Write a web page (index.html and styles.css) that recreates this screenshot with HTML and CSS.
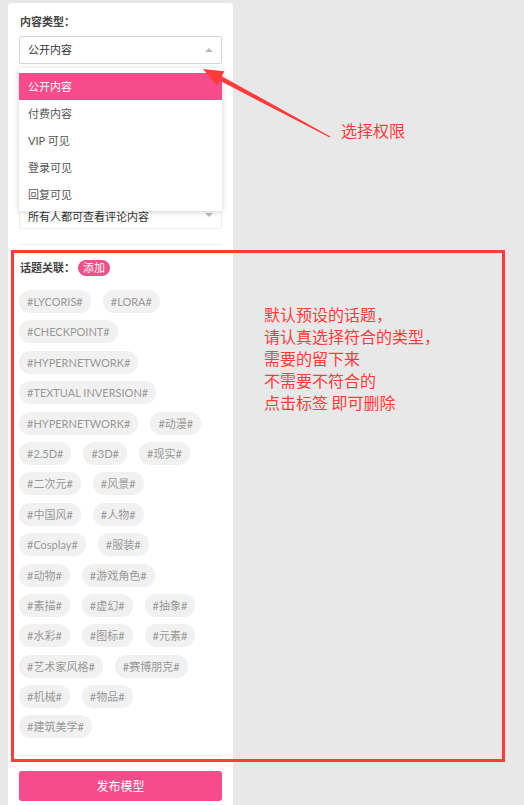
FILE: index.html
```html
<!DOCTYPE html>
<html lang="zh-CN">
<head>
  <meta charset="UTF-8">
  <meta name="viewport" content="width=device-width, initial-scale=1">
  <title>发布模型</title>
  <link rel="stylesheet" href="styles.css">
</head>
<body>
  <div class="page">
    <div class="panel">
      <div class="field">
        <div class="field-label">内容类型：</div>
        <div class="select">
          <span>公开内容</span>
          <i class="caret caret-up"></i>
          <!-- 展开的下拉菜单 -->
          <ul class="dropdown">
            <li class="active">公开内容</li>
            <li>付费内容</li>
            <li>VIP 可见</li>
            <li>登录可见</li>
            <li>回复可见</li>
          </ul>
        </div>
      </div>

      <div class="field">
        <div class="field-label">下载权限：</div>
        <div class="select">
          <span>允许下载</span>
          <i class="caret"></i>
        </div>
      </div>

      <div class="field">
        <div class="field-label">评论权限：</div>
        <div class="select select-low">
          <span>所有人都可查看评论内容</span>
          <i class="caret"></i>
        </div>
      </div>

      <div class="topics">
        <div class="topics-head">
          <span class="field-label">话题关联：</span>
          <span class="add-btn">添加</span>
        </div>
        <div class="tags">
          <span class="tag">#LYCORIS#</span>
          <span class="tag">#LORA#</span>
          <span class="tag">#CHECKPOINT#</span>
          <span class="tag">#HYPERNETWORK#</span>
          <span class="tag">#TEXTUAL INVERSION#</span>
          <span class="tag">#HYPERNETWORK#</span>
          <span class="tag">#动漫#</span>
          <span class="tag">#2.5D#</span>
          <span class="tag">#3D#</span>
          <span class="tag">#现实#</span>
          <span class="tag">#二次元#</span>
          <span class="tag">#风景#</span>
          <span class="tag">#中国风#</span>
          <span class="tag">#人物#</span>
          <span class="tag">#Cosplay#</span>
          <span class="tag">#服装#</span>
          <span class="tag">#动物#</span>
          <span class="tag">#游戏角色#</span>
          <span class="tag">#素描#</span>
          <span class="tag">#虚幻#</span>
          <span class="tag">#抽象#</span>
          <span class="tag">#水彩#</span>
          <span class="tag">#图标#</span>
          <span class="tag">#元素#</span>
          <span class="tag">#艺术家风格#</span>
          <span class="tag">#赛博朋克#</span>
          <span class="tag">#机械#</span>
          <span class="tag">#物品#</span>
          <span class="tag">#建筑美学#</span>
        </div>
      </div>

      <button class="submit">发布模型</button>
    </div>

    <!-- 标注 -->
    <div class="mark-box"></div>
    <svg class="mark-arrow" width="524" height="805" viewBox="0 0 524 805">
      <polygon points="203,69 224.4,71.3 221.8,76.2 330.3,136.5 329.8,137.5 219.4,80.6 216.8,85.5" fill="#ff3b3b"/>
    </svg>
    <div class="mark-note note-perm">选择权限</div>
    <div class="mark-note note-topics">
      默认预设的话题，<br>
      请认真选择符合的类型，<br>
      需要的留下来<br>
      不需要不符合的<br>
      点击标签 即可删除
    </div>
  </div>
</body>
</html>
```

FILE: styles.css
```css
body {
  margin: 0;
  background: #e8e8e8;
  font-family: Lato, "Noto Sans CJK SC", sans-serif;
  color: #333;
}
.page {
  position: relative;
  height: 805px;
  overflow: hidden;
}
.panel {
  width: 203px;
  min-height: 900px;
  margin: 3px 0 0 8px;
  padding: 11px 11px 20px;
  background: #fff;
  border-radius: 4px 4px 0 0;
}
.field + .field {
  margin-top: 32.5px;
}
.field-label {
  font-size: 11px;
  line-height: 16px;
  font-weight: bold;
  color: #444;
  padding-left: 1px;
}
.field .field-label {
  margin-bottom: 6px;
}
.select {
  position: relative;
  height: 26px;
  line-height: 26px;
  border: 1px solid #d6d6d6;
  border-radius: 2px;
  padding: 0 8px;
  font-size: 11px;
  color: #333;
}
.select-low {
  line-height: 29px;
  border-color: #eee;
}
.caret {
  position: absolute;
  right: 8px;
  top: 11px;
  border-left: 4px solid transparent;
  border-right: 4px solid transparent;
  border-top: 4px solid #bbb;
}
.caret-up {
  border-top: none;
  border-bottom: 4px solid #bbb;
}
.dropdown {
  position: absolute;
  left: -1px;
  top: 31px;
  z-index: 2;
  width: 203px;
  margin: 0;
  padding: 5px 0 3px;
  list-style: none;
  background: #fff;
  box-shadow: 0 1px 6px rgba(0,0,0,0.18);
}
.dropdown li {
  height: 27px;
  line-height: 27px;
  padding: 0 9px;
  color: #555;
}
.dropdown li.active {
  background: #f64c8b;
  color: #fff;
}
.topics {
  margin-top: 15px;
  padding: 15px 0 9px;
  border-top: 1px solid #eee;
  border-bottom: 1px solid #eee;
}
.topics-head {
  display: flex;
  align-items: center;
  height: 16px;
}
.add-btn {
  margin-left: 3px;
  height: 16px;
  line-height: 16px;
  padding: 0 5px;
  border-radius: 8px;
  background: #f0508a;
  color: #fff;
  font-size: 11px;
}
.tags {
  display: flex;
  flex-wrap: wrap;
  margin-top: 14px;
  padding-right: 6px;
}
.tag {
  height: 23px;
  line-height: 23px;
  padding: 0 8px;
  margin: 0 12px 7.4px 0;
  border-radius: 12px;
  background: #f1f1f1;
  color: #999;
  font-size: 11px;
  white-space: nowrap;
  cursor: pointer;
}
.submit {
  display: block;
  width: 100%;
  height: 30px;
  margin-top: 15px;
  border: none;
  border-radius: 3px;
  background: #f64c8b;
  color: #fff;
  font-family: inherit;
  font-size: 12px;
  cursor: pointer;
}
.mark-box {
  position: absolute;
  left: 11px;
  top: 250px;
  width: 488px;
  height: 506px;
  border: 3px solid #ff3b3b;
  pointer-events: none;
}
.mark-arrow {
  position: absolute;
  left: 0;
  top: 0;
  z-index: 3;
  pointer-events: none;
}
.mark-note {
  position: absolute;
  color: #ff3b3b;
  font-family: "Noto Sans CJK SC", sans-serif;
  font-size: 16px;
  line-height: 22px;
}
.note-perm {
  left: 341px;
  top: 119px;
}
.note-topics {
  left: 264px;
  top: 303px;
}
```
